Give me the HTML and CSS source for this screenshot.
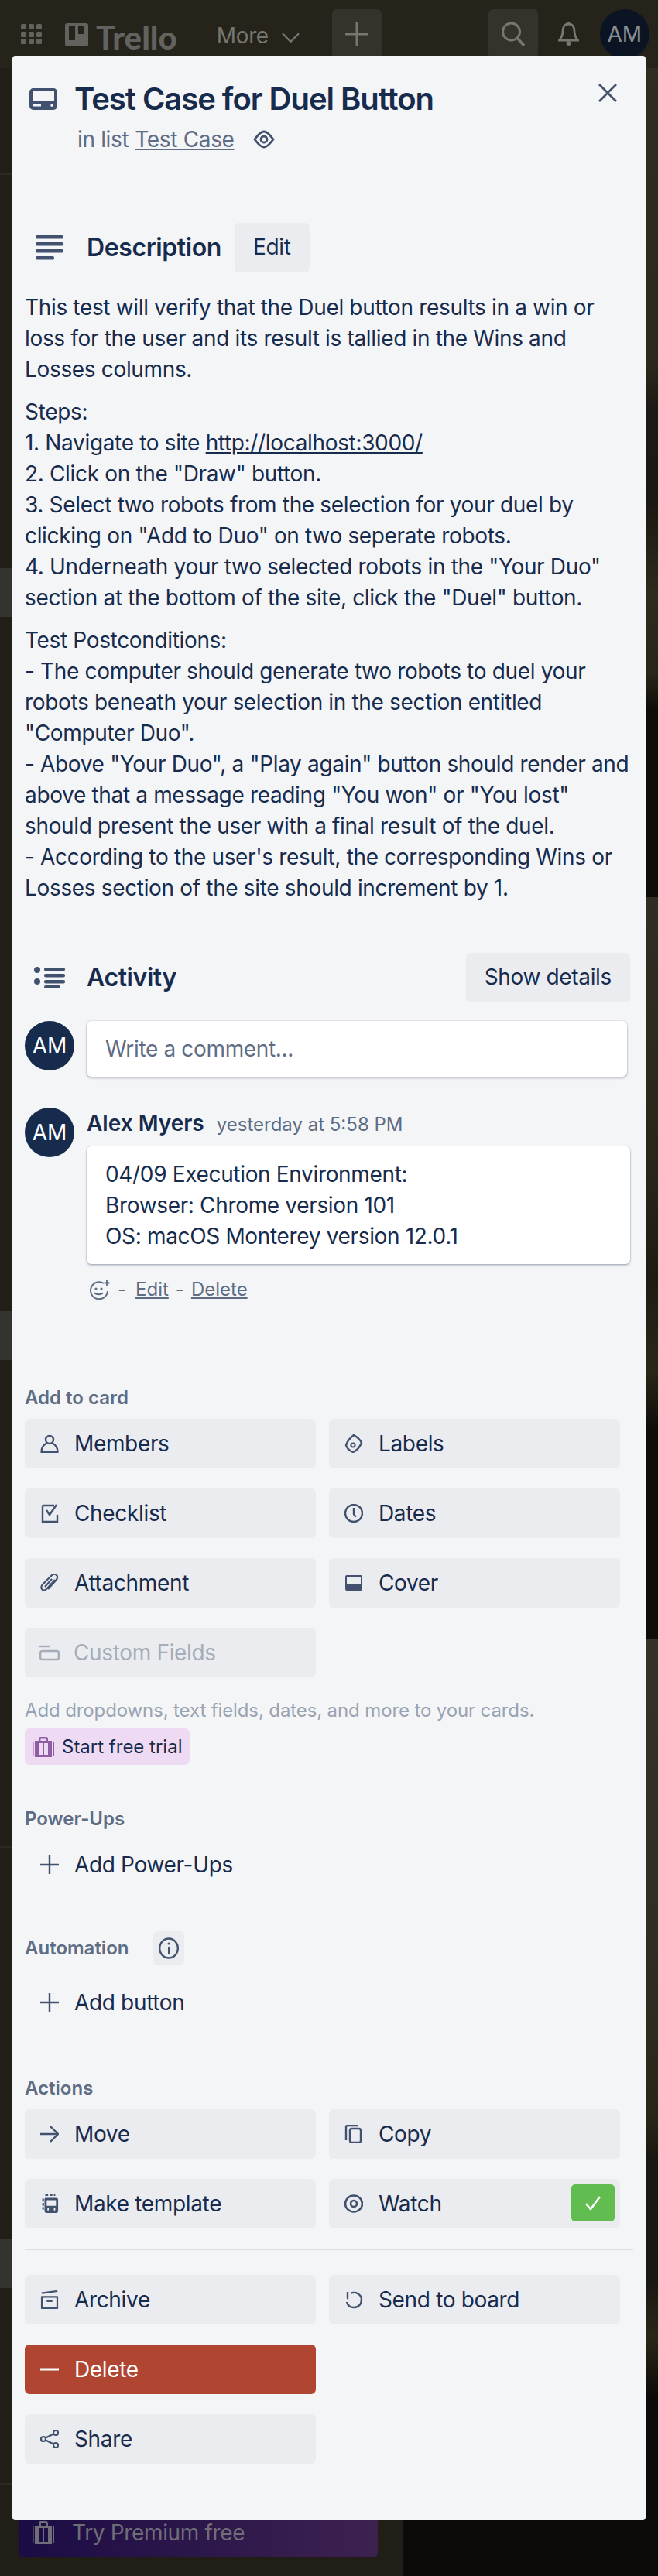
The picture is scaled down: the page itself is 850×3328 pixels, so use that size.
FILE: index.html
```html
<!DOCTYPE html>
<html lang="en">
<head>
    <meta charset="UTF-8">
    <title>Test Case for Duel Button</title>
    <link rel="stylesheet" href="styles.css">
</head>
<body>

<div id="board">
    <div class="topbar">
        <svg class="apps" viewBox="0 0 27 26"><g fill="currentColor"><rect x="0" y="0" width="7" height="7" rx="1.5"/><rect x="10" y="0" width="7" height="7" rx="1.5"/><rect x="20" y="0" width="7" height="7" rx="1.5"/><rect x="0" y="10" width="7" height="7" rx="1.5"/><rect x="10" y="10" width="7" height="7" rx="1.5"/><rect x="20" y="10" width="7" height="7" rx="1.5"/><rect x="0" y="19" width="7" height="7" rx="1.5"/><rect x="10" y="19" width="7" height="7" rx="1.5"/><rect x="20" y="19" width="7" height="7" rx="1.5"/></g></svg>
        <svg class="logo" viewBox="0 0 30 30"><path fill="currentColor" fill-rule="evenodd" d="M3 0h24a3 3 0 0 1 3 3v24a3 3 0 0 1-3 3H3a3 3 0 0 1-3-3V3a3 3 0 0 1 3-3zM5 4v18h8V4zM17 4v10h8V4z"/></svg>
        <span class="brand">Trello</span>
        <span class="more">More</span>
        <svg class="chev" viewBox="0 0 24 14"><path d="M1 1l11 11L23 1" fill="none" stroke="currentColor" stroke-width="2.4"/></svg>
        <span class="topbtn plusbtn"><svg viewBox="0 0 30 30" width="30" height="30"><path d="M15 0v30M0 15h30" stroke="currentColor" stroke-width="3"/></svg></span>
        <span class="topbtn searchbtn"><svg viewBox="0 0 30 32" width="30" height="32"><circle cx="12.500" cy="13" r="11" fill="none" stroke="currentColor" stroke-width="3"/><path d="M20 21l9 10" stroke="currentColor" stroke-width="3.500"/></svg></span>
        <svg class="bell" viewBox="0 0 27 31"><path d="M13.500 3c-5 0-7.500 4-7.500 9 0 6-2 9-4.500 12h24c-2.500-3-4.500-6-4.500-12 0-5-2.500-9-7.500-9z" fill="none" stroke="currentColor" stroke-width="2.800"/><circle cx="13.500" cy="2.500" r="2" fill="currentColor"/><circle cx="13.500" cy="28" r="3" fill="currentColor"/></svg>
        <span class="avatar avatar-top">AM</span>
    </div>
    <div class="backdrop">
        <div class="lists">
            <div class="line l1"></div>
            <div class="shade s1"></div>
            <div class="shade s2"></div>
            <div class="shade s3"></div>
            <div class="line l2"></div>
            <div class="line l3"></div>
            <div class="premium">
                <svg class="bag" viewBox="0 0 28 30"><path fill="currentColor" d="M8 6V3a3 3 0 0 1 3-3h6a3 3 0 0 1 3 3v3h5v24H3V6zM11 3v3h6V3zM8 9v18h5V9zM15 9v18h5V9zM0 7h1.500v22H0zM26.500 7H28v22h-1.500z"/></svg>
                <span>Try Premium free</span>
            </div>
        </div>
        <div class="photo"></div>
    </div>
</div>

<div id="modal">
    <button class="close" aria-label="Close"><svg viewBox="0 0 26 24" width="26" height="24"><path d="M2 1l22 22M24 1L2 23" stroke="currentColor" stroke-width="2.800"/></svg></button>

    <div class="head">
        <svg class="head-ico" viewBox="0 0 36 28"><path fill="currentColor" fill-rule="evenodd" d="M5 0h26a5 5 0 0 1 5 5v18a5 5 0 0 1-5 5H5a5 5 0 0 1-5-5V5a5 5 0 0 1 5-5zM4 4v13h28V4zM5 20.500v3h10v-3zM29 20.500a1.700 1.700 0 1 0 0 3.400 1.700 1.700 0 0 0 0-3.400z"/></svg>
        <h1>Test Case for Duel Button</h1>
    </div>
    <div class="sub">
        in list <a>Test Case</a>
        <svg class="sub-eye" viewBox="0 0 28 24"><path d="M14 2c5 0 9 6 12 10-3 4-7 10-12 10S5 16 2 12C5 8 9 2 14 2z" fill="none" stroke="currentColor" stroke-width="2.800"/><circle cx="14" cy="12" r="4" fill="none" stroke="currentColor" stroke-width="2.800"/></svg>
    </div>

    <div class="sec-head desc-head">
        <svg class="sec-ico" viewBox="0 0 36 32"><g fill="currentColor"><rect y="0" width="36" height="4.500" rx="2"/><rect y="9" width="36" height="4.500" rx="2"/><rect y="18" width="36" height="4.500" rx="2"/><rect y="27" width="24" height="4.500" rx="2"/></g></svg>
        <h2>Description</h2>
        <span class="plain-btn">Edit</span>
    </div>
    <div class="desc">
        <p>This test will verify that the Duel button results in a win or loss for the user and its result is tallied in the Wins and Losses columns.</p>
        <p>Steps:<br>1. Navigate to site <a>http://localhost:3000/</a><br>2. Click on the "Draw" button.<br>3. Select two robots from the selection for your duel by clicking on "Add to Duo" on two seperate robots.<br>4. Underneath your two selected robots in the "Your Duo" section at the bottom of the site, click the "Duel" button.</p>
        <p>Test Postconditions:<br>- The computer should generate two robots to duel your robots beneath your selection in the section entitled "Computer Duo".<br>- Above "Your Duo", a "Play again" button should render and above that a message reading "You won" or "You lost" should present the user with a final result of the duel.<br>- According to the user's result, the corresponding Wins or Losses section of the site should increment by 1.</p>
    </div>

    <div class="sec-head act-head">
        <svg class="sec-ico act-ico" viewBox="0 0 40 28"><g fill="currentColor"><circle cx="4" cy="4" r="4"/><circle cx="4" cy="19" r="4"/><rect x="13" y="1" width="27" height="4.500" rx="2"/><rect x="13" y="9" width="27" height="4.500" rx="2"/><rect x="13" y="17" width="27" height="4.500" rx="2"/><rect x="13" y="24" width="21" height="4" rx="2"/></g></svg>
        <h2>Activity</h2>
        <span class="plain-btn details">Show details</span>
    </div>

    <div class="comment-new">
        <span class="avatar">AM</span>
        <div class="comment-input">Write a comment...</div>
    </div>

    <div class="comment">
        <span class="avatar">AM</span>
        <div class="comment-body">
            <div class="meta"><b>Alex Myers</b><span>yesterday at 5:58 PM</span></div>
            <div class="comment-card">04/09 Execution Environment:<br>Browser: Chrome version 101<br>OS: macOS Monterey version 12.0.1</div>
            <div class="comment-links">
                <svg class="smile" viewBox="0 0 27 25"><path d="M19 4A11 11 0 1 0 24 14" fill="none" stroke="currentColor" stroke-width="2"/><circle cx="9" cy="11" r="1.600" fill="currentColor"/><circle cx="16" cy="11" r="1.600" fill="currentColor"/><path d="M7 16c2 3 9 3 11 0" fill="none" stroke="currentColor" stroke-width="2"/><path d="M23 0v7M19.500 3.500h7" stroke="currentColor" stroke-width="1.800"/></svg>
                <span class="dash">-</span><a>Edit</a><span class="dash2">-</span><a>Delete</a>
            </div>
        </div>
    </div>

    <h3 class="label add-label">Add to card</h3>
    <div class="btn-grid">
        <span class="btn"><svg viewBox="0 0 24 24"><circle cx="12" cy="7" r="5" fill="none" stroke="currentColor" stroke-width="2.400"/><path d="M7.500 12C4 14 1.500 18 1.500 23h21c0-5-2.500-9-6-11" fill="none" stroke="currentColor" stroke-width="2.400" stroke-linejoin="round"/></svg>Members</span>
        <span class="btn"><svg viewBox="0 0 24 24"><path d="M12 1c5 3 9 7 10 10-2 5-6 10-11 12C6 21 3 18 2 14 4 8 8 4 12 1z" fill="none" stroke="currentColor" stroke-width="2.400" stroke-linejoin="round"/><circle cx="11" cy="14" r="2.600" fill="none" stroke="currentColor" stroke-width="2"/></svg>Labels</span>
        <span class="btn"><svg viewBox="0 0 24 24"><path d="M18 2H4a1 1 0 0 0-1 1v20h19v-9M8 8l4 6 9-13" fill="none" stroke="currentColor" stroke-width="2.400"/></svg>Checklist</span>
        <span class="btn"><svg viewBox="0 0 24 24"><circle cx="12" cy="12" r="11" fill="none" stroke="currentColor" stroke-width="2.400"/><path d="M12 5v8l2.500 4" fill="none" stroke="currentColor" stroke-width="2.400"/></svg>Dates</span>
        <span class="btn"><svg viewBox="0 0 24 24"><path d="M19 8L8 20c-2 2-5 2-6 0-1-2-1-4 1-6L14 3c2-2 5-3 7-1 2 2 1 5-1 7L10 20M15 7L6 17" fill="none" stroke="currentColor" stroke-width="2.200"/></svg>Attachment</span>
        <span class="btn"><svg viewBox="0 0 24 24"><path fill="currentColor" fill-rule="evenodd" d="M3 2h18a2 2 0 0 1 2 2v16a2 2 0 0 1-2 2H3a2 2 0 0 1-2-2V4a2 2 0 0 1 2-2zM3 4v9h18V4z"/></svg>Cover</span>
        <span class="btn off"><svg viewBox="0 0 26 24"><path d="M0 4h13" stroke="currentColor" stroke-width="2.400"/><rect x="1.200" y="10" width="23.600" height="11" rx="2.500" fill="none" stroke="currentColor" stroke-width="2.400"/></svg>Custom Fields</span>
    </div>
    <p class="hint">Add dropdowns, text fields, dates, and more to your cards.</p>
    <span class="trial">
        <svg viewBox="0 0 28 26"><path fill="currentColor" d="M8 5V2.500A2.500 2.500 0 0 1 10.500 0h7A2.500 2.500 0 0 1 20 2.500V5h5v21H3V5zM10.500 2.500V5h7V2.500zM8 8v15h5V8zM15 8v15h5V8zM0 6h1.500v19H0zM26.500 6H28v19h-1.500z"/></svg>
        Start free trial
    </span>

    <h3 class="label power-label">Power-Ups</h3>
    <span class="btn flat"><svg viewBox="0 0 24 24"><path d="M12 0v24M0 12h24" stroke="currentColor" stroke-width="2.400"/></svg>Add Power-Ups</span>

    <div class="auto-row">
        <h3 class="label">Automation</h3>
        <span class="info"><svg viewBox="0 0 26 28" width="26" height="28"><ellipse cx="13" cy="14" rx="11.800" ry="12.500" fill="none" stroke="currentColor" stroke-width="2.400"/><path d="M13 12v9" stroke="currentColor" stroke-width="2"/><circle cx="13" cy="8" r="1.500" fill="currentColor"/></svg></span>
    </div>
    <span class="btn flat add-btn"><svg viewBox="0 0 24 24"><path d="M12 0v24M0 12h24" stroke="currentColor" stroke-width="2.400"/></svg>Add button</span>

    <h3 class="label act-label">Actions</h3>
    <div class="btn-grid">
        <span class="btn"><svg viewBox="0 0 24 24"><path d="M0 12h22M13 2l10 10-10 10" fill="none" stroke="currentColor" stroke-width="2.400"/></svg>Move</span>
        <span class="btn"><svg viewBox="0 0 24 24"><path d="M2 20V3a2 2 0 0 1 2-2h13" fill="none" stroke="currentColor" stroke-width="2.400"/><rect x="7" y="5" width="14" height="18" rx="2.500" fill="none" stroke="currentColor" stroke-width="2.400"/></svg>Copy</span>
        <span class="btn"><svg viewBox="0 0 24 26"><path fill="currentColor" fill-rule="evenodd" d="M6 5h15a3 3 0 0 1 3 3v15a3 3 0 0 1-3 3H8a3 3 0 0 1-3-3V8a3 3 0 0 1 1-3zM8 8v8h13V8zM9 19.500v3h2v-3zM18 19.500v3h2v-3z"/><path d="M3 6v15M6 1h14" stroke="currentColor" stroke-width="2.400" stroke-dasharray="4 2"/></svg>Make template</span>
        <span class="btn watch"><svg viewBox="0 0 24 24"><ellipse cx="12" cy="12" rx="11" ry="10.500" fill="none" stroke="currentColor" stroke-width="2.600"/><circle cx="12" cy="12" r="4" fill="none" stroke="currentColor" stroke-width="2.600"/></svg>Watch<span class="check"><svg viewBox="0 0 20 20" width="20" height="20"><path d="M1 11l6 7L19 2" fill="none" stroke="#fff" stroke-width="2.600"/></svg></span></span>
    </div>
    <hr class="rule">
    <div class="btn-grid">
        <span class="btn"><svg viewBox="0 0 24 26"><path d="M1 4L23 1" stroke="currentColor" stroke-width="2.400"/><path d="M1.200 9h21.600v16H1.200z" fill="none" stroke="currentColor" stroke-width="2.400" stroke-linejoin="round"/><path d="M8 15h8" stroke="currentColor" stroke-width="2.400"/></svg>Archive</span>
        <span class="btn"><svg viewBox="0 0 24 24"><path d="M4 2v8h-1M8 4c6-3 14 1 14 8s-5 10-10 10-8-3-9-7" fill="none" stroke="currentColor" stroke-width="2.400"/></svg>Send to board</span>
        <span class="btn danger"><svg viewBox="0 0 24 24"><path d="M0 12h24" stroke="currentColor" stroke-width="3"/></svg>Delete</span>
        <span class="grid-gap"></span>
        <span class="btn"><svg viewBox="0 0 24 24"><path d="M20 4L4 12l16 8" fill="none" stroke="currentColor" stroke-width="2.200"/><circle cx="20" cy="4" r="3" fill="#ebecf0" stroke="currentColor" stroke-width="2.200"/><circle cx="4" cy="12" r="3" fill="#ebecf0" stroke="currentColor" stroke-width="2.200"/><circle cx="20" cy="20" r="3" fill="#ebecf0" stroke="currentColor" stroke-width="2.200"/></svg>Share</span>
    </div>
</div>

</body>
</html>
```

FILE: styles.css
```css
*{
    margin: 0;
    padding: 0;
    box-sizing: border-box;
}
body{
    width: 850px;
    height: 3328px;
    position: relative;
    overflow: hidden;
    background: #0d0c09;
    font-family: Inter, "Liberation Sans", sans-serif;
    font-size: 28px;
    line-height: 40px;
    letter-spacing: -.34px;
    color: #172b4d;
}
a{
    text-decoration: underline;
}

/* page behind the dialog */
#board{
    height: 3328px;
    display: flex;
    flex-direction: column;
}
.topbar{
    height: 88px;
    flex: none;
    display: flex;
    align-items: flex-start;
    padding: 12px 8px 0 27px;
    background: #26231b;
    color: #63625f;
}
.apps{
    width: 27px;
    height: 26px;
    margin-top: 19px;
}
.logo{
    width: 30px;
    height: 30px;
    margin: 18px 0 0 30px;
}
.brand{
    margin: 11px 0 0 10px;
    font-family: Lato, sans-serif;
    font-weight: 900;
    font-size: 42px;
    line-height: 50px;
    letter-spacing: 0;
}
.more{
    margin: 14px 0 0 51px;
    color: #77766f;
}
.chev{
    width: 23px;
    height: 14px;
    margin: 30px 0 0 17px;
    color: #77766f;
}
.topbtn{
    width: 64px;
    height: 64px;
    border-radius: 6px;
    background: #35322c;
    display: flex;
    align-items: center;
    justify-content: center;
    color: #77766f;
}
.plusbtn{
    margin-left: 42px;
}
.searchbtn{
    margin-left: 138px;
}
.bell{
    width: 27px;
    height: 31px;
    margin: 16px 0 0 26px;
    color: #77766f;
}
.avatar{
    width: 64px;
    height: 64px;
    flex: none;
    border-radius: 50%;
    background: #172b4d;
    color: #fff;
    text-align: center;
    line-height: 64px;
    font-size: 28px;
    letter-spacing: 0;
}
.avatar-top{
    margin-left: 27px;
    background: #0b1423;
    color: #8a8f96;
}
.backdrop{
    flex: 1;
    display: flex;
}
.lists{
    width: 521px;
    background: #201e17;
    position: relative;
}
.line{
    position: absolute;
    left: 0;
    width: 100%;
    height: 2px;
    background: #2c2a23;
}
.l1{ top: 136px; }
.l2{ top: 2297px; }
.l3{ top: 3120px; }
.shade{
    position: absolute;
    left: 0;
    width: 100%;
    background: #35332d;
}
.s1{ top: 646px; height: 63px; }
.s2{ top: 1606px; height: 63px; }
.s3{ top: 2805px; height: 63px; }
.premium{
    position: absolute;
    left: 24px;
    right: 33px;
    bottom: 24px;
    height: 96px;
    padding: 32px 0 0 18px;
    border-radius: 6px;
    background: linear-gradient(90deg, #1b0c45, #3d2250);
    display: flex;
    align-items: center;
    gap: 23px;
    color: #6f6d78;
    font-size: 28px;
}
.bag{
    width: 28px;
    height: 30px;
}
.photo{
    flex: 1;
    background:
        linear-gradient(180deg, #302d20 0, #2c291c 380px, #1c1a14 440px, #1a1812 560px, #2e2a1c 680px, #29261a 780px, #0d0c08 830px, #0d0c08 1071px, #302e23 1071px, #2a2719 1400px, #1d1b14 1560px, #2a2618 1680px, #0d0c08 1760px, #0d0c08 2029px, #35322a 2029px, #2e2b20 2500px, #2a2718 2640px, #1a1813 2700px, #1a1813 2860px, #2a2618 2930px, #0b0a08 3010px);
}

/* dialog */
#modal{
    position: absolute;
    left: 16px;
    top: 72px;
    width: 818px;
    height: 3184px;
    padding: 32px 16px 0;
    background: #f4f5f7;
    border-radius: 4px;
}
.close{
    position: absolute;
    top: 36px;
    right: 36px;
    border: 0;
    background: none;
    color: #42526e;
    line-height: 0;
}
.head{
    display: flex;
    align-items: center;
    height: 48px;
    padding-left: 6px;
    gap: 22px;
}
.head-ico{
    width: 36px;
    height: 28px;
    color: #42526e;
}
h1{
    font-size: 40px;
    line-height: 48px;
    font-weight: 600;
    letter-spacing: -1.04px;
}
.sub{
    margin: 8px 0 0 68px;
    display: flex;
    gap: 8px;
    align-items: center;
    color: #5e6c84;
}
.sub-eye{
    width: 28px;
    height: 24px;
    margin-left: 16px;
    color: #42526e;
}
.sec-head{
    display: flex;
    align-items: center;
    height: 64px;
}
h2{
    font-size: 32px;
    line-height: 40px;
    font-weight: 600;
    letter-spacing: -.4px;
}
.sec-ico{
    width: 36px;
    height: 32px;
    margin: 0 30px 0 14px;
    color: #42526e;
}
.act-ico{
    width: 40px;
    height: 28px;
    margin: 0 28px 0 12px;
}
.desc-head{
    margin-top: 88px;
}
.plain-btn{
    display: block;
    height: 64px;
    padding: 0 24px;
    margin-left: 17px;
    line-height: 62px;
    background: #ebecf0;
    border-radius: 6px;
}
.details{
    margin-left: auto;
    margin-right: 4px;
}
.desc{
    margin-top: 25px;
}
.desc p{
    margin-bottom: 15px;
}
.act-head{
    margin-top: 64px;
}
.comment-new{
    display: flex;
    gap: 16px;
    margin-top: 24px;
}
.comment-input{
    width: 698px;
    height: 72px;
    padding: 16px 24px;
    background: #fff;
    border-radius: 6px;
    box-shadow: 0 2px 3px rgba(9,30,66,.25), 0 0 0 1px rgba(9,30,66,.08);
    color: #5e6c84;
}
.comment{
    display: flex;
    gap: 16px;
    margin-top: 40px;
}
.comment-body{
    width: 702px;
}
.meta{
    display: flex;
    gap: 16px;
    align-items: baseline;
    letter-spacing: 0;
}
.meta b{
    font-weight: 600;
}
.meta span{
    font-size: 24px;
    color: #5e6c84;
}
.comment-card{
    margin-top: 8px;
    height: 152px;
    padding: 16px 24px;
    background: #fff;
    border-radius: 6px;
    box-shadow: 0 2px 3px rgba(9,30,66,.25), 0 0 0 1px rgba(9,30,66,.08);
}
.comment-links{
    display: flex;
    align-items: center;
    height: 40px;
    margin-top: 13px;
    font-size: 24px;
    letter-spacing: 0;
    color: #5e6c84;
}
.smile{
    width: 27px;
    height: 25px;
    margin-left: 3px;
}
.dash{
    margin: 0 12px 0 10px;
}
.dash2{
    margin: 0 9px;
}
.label{
    font-size: 24px;
    line-height: 32px;
    font-weight: 600;
    letter-spacing: 0;
    color: #5e6c84;
}
.add-label{
    margin-top: 104px;
    margin-bottom: 11px;
}
.btn-grid{
    display: grid;
    grid-template-columns: 376px 376px;
    column-gap: 17px;
    row-gap: 26px;
}
.btn{
    display: flex;
    align-items: center;
    height: 64px;
    padding-left: 20px;
    background: #ebecf0;
    border-radius: 6px;
}
.btn svg{
    width: 24px;
    height: 24px;
    margin-right: 20px;
    color: #42526e;
    flex: none;
}
.off{
    color: #a5adba;
}
.btn.off svg{
    width: 26px;
    margin: 0 18px 0 -1px;
    color: #a5adba;
}
.hint{
    margin-top: 27px;
    font-size: 24px;
    line-height: 32px;
    letter-spacing: -.12px;
    color: #9aa3b2;
}
.trial{
    display: flex;
    align-items: center;
    gap: 10px;
    width: 213px;
    height: 47px;
    margin-top: 7px;
    padding-left: 10px;
    background: #eedbf3;
    border-radius: 6px;
    font-size: 24px;
    letter-spacing: 0;
}
.trial svg{
    width: 28px;
    height: 26px;
    color: #8f5ea2;
}
.power-label{
    margin-top: 54px;
}
.flat{
    background: none;
    margin-top: 11px;
}
.auto-row{
    display: flex;
    align-items: center;
    gap: 32px;
    margin-top: 54px;
}
.info{
    width: 40px;
    height: 44px;
    display: flex;
    align-items: center;
    justify-content: center;
    background: #ebecf0;
    border-radius: 6px;
    color: #42526e;
}
.add-btn{
    margin-top: 16px;
}
.act-label{
    margin-top: 63px;
    margin-bottom: 11px;
}
.watch{
    position: relative;
}
.check{
    position: absolute;
    right: 7px;
    top: 7px;
    width: 56px;
    height: 48px;
    background: #61bd4f;
    border-radius: 5px;
    display: flex;
    align-items: center;
    justify-content: center;
}
.check svg{
    width: 20px;
    height: 20px;
    margin: 0;
    color: #fff;
}
.rule{
    border: 0;
    height: 2px;
    width: 786px;
    margin: 26px 0 32px;
    background: #dcdfe4;
}
.danger{
    background: #b04632;
    color: #fff;
}
.danger svg{
    color: #fff;
}
.grid-gap{
    display: block;
}
```
